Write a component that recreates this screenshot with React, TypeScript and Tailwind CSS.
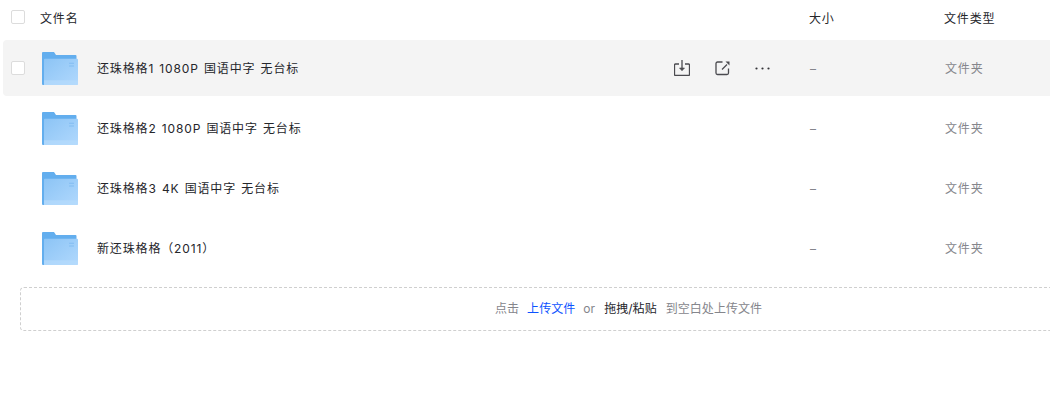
const rows = [
  "还珠格格1 1080P 国语中字 无台标",
  "还珠格格2 1080P 国语中字 无台标",
  "还珠格格3 4K 国语中字 无台标",
  "新还珠格格（2011）",
]

function FolderIcon() {
  return (
    <svg width="36" height="33" viewBox="0 0 36 34" preserveAspectRatio="none" className="mt-[1px] shrink-0">
      <defs>
        <linearGradient id="front" x1="0" y1="0" x2="1" y2="1">
          <stop offset="0" stopColor="#8cc4f5" />
          <stop offset="1" stopColor="#b0d8fd" />
        </linearGradient>
      </defs>
      <path d="M1 0h11l2 3h19.500a1 1 0 0 1 1 1v29a1 1 0 0 1-1 1H1a1 1 0 0 1-1-1V1a1 1 0 0 1 1-1z" fill="#63aeee" />
      <path d="M2 8a1 1 0 0 1 1-1h32a1 1 0 0 1 1 1v25a1 1 0 0 1-1 1H2z" fill="url(#front)" />
      <path d="M2 29h34v4a1 1 0 0 1-1 1H2z" fill="#b7dbfc" opacity="0.7" />
      <path d="M27 11h5v1h-5zM27 14h5v1h-5z" fill="#82bdf2" />
    </svg>
  )
}

function DownloadIcon() {
  return (
    <svg width="16" height="16" viewBox="0 0 16 16" fill="none" stroke="#4a4a4f" strokeWidth="1.300">
      <path d="M5 4H1.500a1 1 0 0 0-1 1v9.500a1 1 0 0 0 1 1h13a1 1 0 0 0 1-1V5a1 1 0 0 0-1-1H11" />
      <path d="M8 0v8" />
      <path d="M5.500 8h5L8 10.800z" fill="#4a4a4f" strokeWidth="0.600" />
    </svg>
  )
}

function ShareIcon() {
  return (
    <svg width="15" height="15" viewBox="0 0 15 15" fill="none" stroke="#4a4a4f" strokeWidth="1.300">
      <path d="M7.500 1H2.500A1.500 1.500 0 0 0 1 2.500v9.500a1.500 1.500 0 0 0 1.500 1.500h9.500a1.500 1.500 0 0 0 1.500-1.500V7.500" />
      <path d="M7 8.500L12 3.500" />
      <path d="M10.500 0.500H14.500V4.500z" fill="#4a4a4f" stroke="none" />
    </svg>
  )
}

function MoreIcon() {
  return (
    <svg width="15" height="3" viewBox="0 0 15 3" fill="#333338">
      <circle cx="1.500" cy="1.500" r="1.100" />
      <circle cx="7.500" cy="1.500" r="1.100" />
      <circle cx="13.500" cy="1.500" r="1.100" />
    </svg>
  )
}

export default function App() {
  return (
    <div className="flex h-[402px] w-[1050px] flex-col gap-[4px] overflow-hidden bg-white font-['Inter','Noto_Sans_CJK_SC',sans-serif] text-xs tracking-[0.85px] text-[#25262b] [word-spacing:1px]">
      <div className="flex h-[36px] items-center pl-[11px]">
        <span className="mb-[2px] h-[14px] w-[14px] rounded-[2px] border border-[#dcdcdc] bg-white" />
        <span className="ml-[15px] w-[769px] pt-[2px]">文件名</span>
        <span className="w-[135px] pt-[2px]">大小</span>
        <span className="pt-[2px]">文件类型</span>
      </div>
      {rows.map((name, i) => (
        <div key={name} className={`ml-[3px] flex h-[56px] items-center rounded-l-[4px] pl-[8px] ${i === 0 ? "bg-[#f4f4f4]" : ""}`}>
          <span className={`h-[14px] w-[14px] rounded-[2px] border border-[#dcdcdc] bg-white ${i === 0 ? "" : "invisible"}`} />
          <span className="ml-[17px] flex"><FolderIcon /></span>
          <span className="ml-[19px] w-[577px] whitespace-nowrap pt-[2px]">{name}</span>
          <div className={`flex w-[136px] items-center ${i === 0 ? "" : "invisible"}`}>
            <span className="w-[41px]"><DownloadIcon /></span>
            <span className="w-[40px]"><ShareIcon /></span>
            <MoreIcon />
          </div>
          <span className="w-[134px] pt-[2px] text-[#85868c]">–</span>
          <span className="ml-[1px] pt-[2px] text-[#85868c]">文件夹</span>
        </div>
      ))}
      <div className="mt-[7px] ml-[20px] flex h-[44px] w-[1100px] shrink-0 items-center rounded-[4px] border border-dashed border-[#cfcfcf] pl-[474px] tracking-[0.05px] text-[#85868c] [word-spacing:0]">
        <span>点击</span>
        <span className="ml-[8px] text-[#0d53ff]">上传文件</span>
        <span className="ml-[8px]">or</span>
        <span className="ml-[9px] text-[#25262b]">拖拽/粘贴</span>
        <span className="ml-[9px]">到空白处上传文件</span>
      </div>
    </div>
  )
}
